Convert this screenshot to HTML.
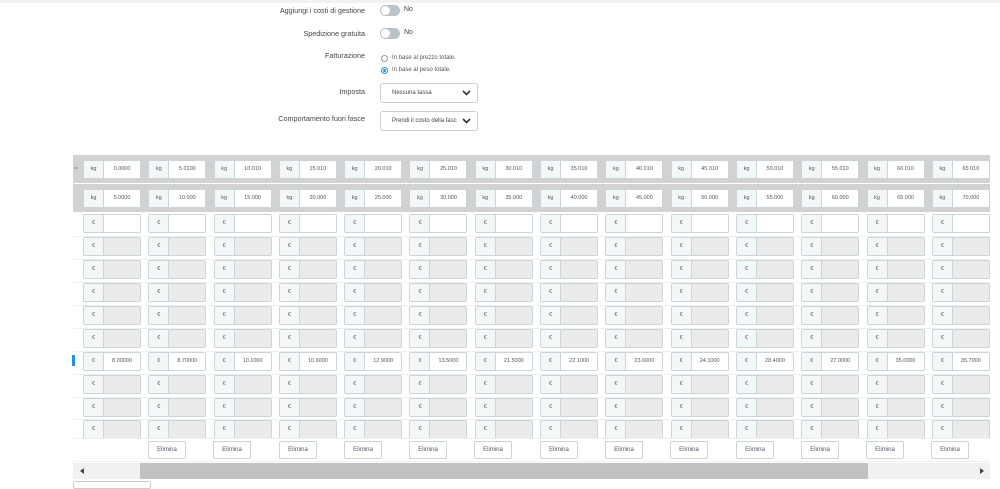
<!DOCTYPE html>
<html><head><meta charset="utf-8"><style>
*{box-sizing:border-box;margin:0;padding:0}
body{width:1000px;height:485px;overflow:hidden;background:#fff;font-family:"Liberation Sans",sans-serif;color:#555;position:relative}
.topl{position:absolute;left:0;top:0;width:1000px;height:3px;background:#f2f2f2}
.lbl{position:absolute;right:635px;font-size:7.2px;color:#444;white-space:nowrap}
.tog{position:absolute;left:380px;width:20px;height:11px;border-radius:6px;background:#b9c3c8}
.tog:after{content:"";position:absolute;left:1px;top:1px;width:9px;height:9px;border-radius:50%;background:#fff}
.no{position:absolute;left:404px;font-size:7px;color:#444}
.rad{position:absolute;left:381px;width:7px;height:7px;border-radius:50%;border:1px solid #999;background:#fff}
.rad.on{border-color:#2a8fe0}.rad.on:after{content:"";position:absolute;left:1px;top:1px;width:3px;height:3px;border-radius:50%;background:#2a8fe0}
.rt{position:absolute;left:392px;font-size:6px;color:#555}
.sel{position:absolute;left:380px;width:98px;height:20px;border:1px solid #c8d0d4;border-radius:3px;font-size:6px;color:#444;padding:6px 0 0 11px;background:#fff}
.sel svg{position:absolute;right:6px;top:6px}
.band{position:absolute;left:73px;width:917px;background:#d2d2d2}
.row{position:absolute;left:73px;height:23px;display:flex;width:930px}
.c{width:65.3px;flex:none;position:relative}
.g{position:absolute;left:10px;top:2px;width:58px;height:19px;border:1px solid #c9d5d9;border-radius:2px;display:flex;background:#fff;font-size:5.5px;color:#555}
.a{width:20px;border-right:1px solid #c9d5d9;background:#f4f7f8;text-align:center;line-height:17px;color:#555}
.i{flex:1;text-align:center;line-height:17px;background:#fff}
.gr .i{background:#ebebeb}
.sep{position:absolute;left:73px;width:917px;height:1px;background:#efefef}
.eb{position:absolute;top:441px;width:38px;height:18px;border:1px solid #c9d5d9;border-radius:2px;font-size:6px;color:#556;text-align:center;line-height:16px;background:#fff}
</style></head><body>
<div class="topl"></div>
<div class="lbl" style="top:6px">Aggiungi i costi di gestione</div><div class="tog" style="top:5px"></div><div class="no" style="top:6px">No</div>
<div class="lbl" style="top:29px">Spedizione gratuita</div><div class="tog" style="top:28px"></div><div class="no" style="top:29px">No</div>
<div class="lbl" style="top:51px">Fatturazione</div>
<div class="rad" style="top:55px"></div><div class="rt" style="top:55px">In base al prezzo totale.</div>
<div class="rad on" style="top:67px"></div><div class="rt" style="top:67px">In base al peso totale.</div>
<div class="lbl" style="top:87px">Imposta</div>
<div class="sel" style="top:83px">Nessuna tassa<svg width="9" height="6" viewBox="0 0 9 6"><path d="M1 1l3.5 3.5L8 1" stroke="#333" stroke-width="1.6" fill="none"/></svg></div>
<div class="lbl" style="top:114px">Comportamento fuori fasce</div>
<div class="sel" style="top:111px">Prendi il costo della fasc<svg width="9" height="6" viewBox="0 0 9 6"><path d="M1 1l3.5 3.5L8 1" stroke="#333" stroke-width="1.6" fill="none"/></svg></div>

<div class="band" style="top:155px;height:28px"></div>
<div class="band" style="top:184px;height:28px"></div>
<div style="position:absolute;left:74px;top:166px;font-size:6px;color:#777">=</div>
<div class="row" style="top:158px">
<div class="c"><div class="g"><div class="a">kg</div><div class="i">0.0000</div></div></div>
<div class="c"><div class="g"><div class="a">kg</div><div class="i">5.0100</div></div></div>
<div class="c"><div class="g"><div class="a">kg</div><div class="i">10.010</div></div></div>
<div class="c"><div class="g"><div class="a">kg</div><div class="i">15.010</div></div></div>
<div class="c"><div class="g"><div class="a">kg</div><div class="i">20.010</div></div></div>
<div class="c"><div class="g"><div class="a">kg</div><div class="i">25.010</div></div></div>
<div class="c"><div class="g"><div class="a">kg</div><div class="i">30.010</div></div></div>
<div class="c"><div class="g"><div class="a">kg</div><div class="i">35.010</div></div></div>
<div class="c"><div class="g"><div class="a">kg</div><div class="i">40.010</div></div></div>
<div class="c"><div class="g"><div class="a">kg</div><div class="i">45.010</div></div></div>
<div class="c"><div class="g"><div class="a">kg</div><div class="i">50.010</div></div></div>
<div class="c"><div class="g"><div class="a">kg</div><div class="i">55.010</div></div></div>
<div class="c"><div class="g"><div class="a">kg</div><div class="i">60.010</div></div></div>
<div class="c"><div class="g"><div class="a">kg</div><div class="i">65.010</div></div></div>
</div>
<div class="row" style="top:187px">
<div class="c"><div class="g"><div class="a">kg</div><div class="i">5.0000</div></div></div>
<div class="c"><div class="g"><div class="a">kg</div><div class="i">10.000</div></div></div>
<div class="c"><div class="g"><div class="a">kg</div><div class="i">15.000</div></div></div>
<div class="c"><div class="g"><div class="a">kg</div><div class="i">20.000</div></div></div>
<div class="c"><div class="g"><div class="a">kg</div><div class="i">25.000</div></div></div>
<div class="c"><div class="g"><div class="a">kg</div><div class="i">30.000</div></div></div>
<div class="c"><div class="g"><div class="a">kg</div><div class="i">35.000</div></div></div>
<div class="c"><div class="g"><div class="a">kg</div><div class="i">40.000</div></div></div>
<div class="c"><div class="g"><div class="a">kg</div><div class="i">45.000</div></div></div>
<div class="c"><div class="g"><div class="a">kg</div><div class="i">50.000</div></div></div>
<div class="c"><div class="g"><div class="a">kg</div><div class="i">55.000</div></div></div>
<div class="c"><div class="g"><div class="a">kg</div><div class="i">60.000</div></div></div>
<div class="c"><div class="g"><div class="a">kg</div><div class="i">65.000</div></div></div>
<div class="c"><div class="g"><div class="a">kg</div><div class="i">70.000</div></div></div>
</div>

<div class="row" style="top:212px"><div class="c"><div class="g"><div class="a">€</div><div class="i"></div></div></div><div class="c"><div class="g"><div class="a">€</div><div class="i"></div></div></div><div class="c"><div class="g"><div class="a">€</div><div class="i"></div></div></div><div class="c"><div class="g"><div class="a">€</div><div class="i"></div></div></div><div class="c"><div class="g"><div class="a">€</div><div class="i"></div></div></div><div class="c"><div class="g"><div class="a">€</div><div class="i"></div></div></div><div class="c"><div class="g"><div class="a">€</div><div class="i"></div></div></div><div class="c"><div class="g"><div class="a">€</div><div class="i"></div></div></div><div class="c"><div class="g"><div class="a">€</div><div class="i"></div></div></div><div class="c"><div class="g"><div class="a">€</div><div class="i"></div></div></div><div class="c"><div class="g"><div class="a">€</div><div class="i"></div></div></div><div class="c"><div class="g"><div class="a">€</div><div class="i"></div></div></div><div class="c"><div class="g"><div class="a">€</div><div class="i"></div></div></div><div class="c"><div class="g"><div class="a">€</div><div class="i"></div></div></div></div>
<div class="sep" style="top:236px"></div>
<div class="row gr" style="top:235px"><div class="c"><div class="g"><div class="a">€</div><div class="i"></div></div></div><div class="c"><div class="g"><div class="a">€</div><div class="i"></div></div></div><div class="c"><div class="g"><div class="a">€</div><div class="i"></div></div></div><div class="c"><div class="g"><div class="a">€</div><div class="i"></div></div></div><div class="c"><div class="g"><div class="a">€</div><div class="i"></div></div></div><div class="c"><div class="g"><div class="a">€</div><div class="i"></div></div></div><div class="c"><div class="g"><div class="a">€</div><div class="i"></div></div></div><div class="c"><div class="g"><div class="a">€</div><div class="i"></div></div></div><div class="c"><div class="g"><div class="a">€</div><div class="i"></div></div></div><div class="c"><div class="g"><div class="a">€</div><div class="i"></div></div></div><div class="c"><div class="g"><div class="a">€</div><div class="i"></div></div></div><div class="c"><div class="g"><div class="a">€</div><div class="i"></div></div></div><div class="c"><div class="g"><div class="a">€</div><div class="i"></div></div></div><div class="c"><div class="g"><div class="a">€</div><div class="i"></div></div></div></div>
<div class="row gr" style="top:258px"><div class="c"><div class="g"><div class="a">€</div><div class="i"></div></div></div><div class="c"><div class="g"><div class="a">€</div><div class="i"></div></div></div><div class="c"><div class="g"><div class="a">€</div><div class="i"></div></div></div><div class="c"><div class="g"><div class="a">€</div><div class="i"></div></div></div><div class="c"><div class="g"><div class="a">€</div><div class="i"></div></div></div><div class="c"><div class="g"><div class="a">€</div><div class="i"></div></div></div><div class="c"><div class="g"><div class="a">€</div><div class="i"></div></div></div><div class="c"><div class="g"><div class="a">€</div><div class="i"></div></div></div><div class="c"><div class="g"><div class="a">€</div><div class="i"></div></div></div><div class="c"><div class="g"><div class="a">€</div><div class="i"></div></div></div><div class="c"><div class="g"><div class="a">€</div><div class="i"></div></div></div><div class="c"><div class="g"><div class="a">€</div><div class="i"></div></div></div><div class="c"><div class="g"><div class="a">€</div><div class="i"></div></div></div><div class="c"><div class="g"><div class="a">€</div><div class="i"></div></div></div></div>
<div class="row gr" style="top:281px"><div class="c"><div class="g"><div class="a">€</div><div class="i"></div></div></div><div class="c"><div class="g"><div class="a">€</div><div class="i"></div></div></div><div class="c"><div class="g"><div class="a">€</div><div class="i"></div></div></div><div class="c"><div class="g"><div class="a">€</div><div class="i"></div></div></div><div class="c"><div class="g"><div class="a">€</div><div class="i"></div></div></div><div class="c"><div class="g"><div class="a">€</div><div class="i"></div></div></div><div class="c"><div class="g"><div class="a">€</div><div class="i"></div></div></div><div class="c"><div class="g"><div class="a">€</div><div class="i"></div></div></div><div class="c"><div class="g"><div class="a">€</div><div class="i"></div></div></div><div class="c"><div class="g"><div class="a">€</div><div class="i"></div></div></div><div class="c"><div class="g"><div class="a">€</div><div class="i"></div></div></div><div class="c"><div class="g"><div class="a">€</div><div class="i"></div></div></div><div class="c"><div class="g"><div class="a">€</div><div class="i"></div></div></div><div class="c"><div class="g"><div class="a">€</div><div class="i"></div></div></div></div>
<div class="row gr" style="top:304px"><div class="c"><div class="g"><div class="a">€</div><div class="i"></div></div></div><div class="c"><div class="g"><div class="a">€</div><div class="i"></div></div></div><div class="c"><div class="g"><div class="a">€</div><div class="i"></div></div></div><div class="c"><div class="g"><div class="a">€</div><div class="i"></div></div></div><div class="c"><div class="g"><div class="a">€</div><div class="i"></div></div></div><div class="c"><div class="g"><div class="a">€</div><div class="i"></div></div></div><div class="c"><div class="g"><div class="a">€</div><div class="i"></div></div></div><div class="c"><div class="g"><div class="a">€</div><div class="i"></div></div></div><div class="c"><div class="g"><div class="a">€</div><div class="i"></div></div></div><div class="c"><div class="g"><div class="a">€</div><div class="i"></div></div></div><div class="c"><div class="g"><div class="a">€</div><div class="i"></div></div></div><div class="c"><div class="g"><div class="a">€</div><div class="i"></div></div></div><div class="c"><div class="g"><div class="a">€</div><div class="i"></div></div></div><div class="c"><div class="g"><div class="a">€</div><div class="i"></div></div></div></div>
<div class="row gr" style="top:327px"><div class="c"><div class="g"><div class="a">€</div><div class="i"></div></div></div><div class="c"><div class="g"><div class="a">€</div><div class="i"></div></div></div><div class="c"><div class="g"><div class="a">€</div><div class="i"></div></div></div><div class="c"><div class="g"><div class="a">€</div><div class="i"></div></div></div><div class="c"><div class="g"><div class="a">€</div><div class="i"></div></div></div><div class="c"><div class="g"><div class="a">€</div><div class="i"></div></div></div><div class="c"><div class="g"><div class="a">€</div><div class="i"></div></div></div><div class="c"><div class="g"><div class="a">€</div><div class="i"></div></div></div><div class="c"><div class="g"><div class="a">€</div><div class="i"></div></div></div><div class="c"><div class="g"><div class="a">€</div><div class="i"></div></div></div><div class="c"><div class="g"><div class="a">€</div><div class="i"></div></div></div><div class="c"><div class="g"><div class="a">€</div><div class="i"></div></div></div><div class="c"><div class="g"><div class="a">€</div><div class="i"></div></div></div><div class="c"><div class="g"><div class="a">€</div><div class="i"></div></div></div></div>
<div style="position:absolute;left:72px;top:355px;width:3px;height:11px;background:#2a8fe0"></div>
<div class="row" style="top:350px"><div class="c"><div class="g"><div class="a">€</div><div class="i">8.00000</div></div></div><div class="c"><div class="g"><div class="a">€</div><div class="i">8.70000</div></div></div><div class="c"><div class="g"><div class="a">€</div><div class="i">10.1000</div></div></div><div class="c"><div class="g"><div class="a">€</div><div class="i">10.6000</div></div></div><div class="c"><div class="g"><div class="a">€</div><div class="i">12.9000</div></div></div><div class="c"><div class="g"><div class="a">€</div><div class="i">13.5000</div></div></div><div class="c"><div class="g"><div class="a">€</div><div class="i">21.5000</div></div></div><div class="c"><div class="g"><div class="a">€</div><div class="i">22.1000</div></div></div><div class="c"><div class="g"><div class="a">€</div><div class="i">23.6000</div></div></div><div class="c"><div class="g"><div class="a">€</div><div class="i">24.1000</div></div></div><div class="c"><div class="g"><div class="a">€</div><div class="i">28.4000</div></div></div><div class="c"><div class="g"><div class="a">€</div><div class="i">27.0000</div></div></div><div class="c"><div class="g"><div class="a">€</div><div class="i">35.0000</div></div></div><div class="c"><div class="g"><div class="a">€</div><div class="i">35.7000</div></div></div></div>
<div class="row gr" style="top:373px"><div class="c"><div class="g"><div class="a">€</div><div class="i"></div></div></div><div class="c"><div class="g"><div class="a">€</div><div class="i"></div></div></div><div class="c"><div class="g"><div class="a">€</div><div class="i"></div></div></div><div class="c"><div class="g"><div class="a">€</div><div class="i"></div></div></div><div class="c"><div class="g"><div class="a">€</div><div class="i"></div></div></div><div class="c"><div class="g"><div class="a">€</div><div class="i"></div></div></div><div class="c"><div class="g"><div class="a">€</div><div class="i"></div></div></div><div class="c"><div class="g"><div class="a">€</div><div class="i"></div></div></div><div class="c"><div class="g"><div class="a">€</div><div class="i"></div></div></div><div class="c"><div class="g"><div class="a">€</div><div class="i"></div></div></div><div class="c"><div class="g"><div class="a">€</div><div class="i"></div></div></div><div class="c"><div class="g"><div class="a">€</div><div class="i"></div></div></div><div class="c"><div class="g"><div class="a">€</div><div class="i"></div></div></div><div class="c"><div class="g"><div class="a">€</div><div class="i"></div></div></div></div>
<div class="row gr" style="top:396px"><div class="c"><div class="g"><div class="a">€</div><div class="i"></div></div></div><div class="c"><div class="g"><div class="a">€</div><div class="i"></div></div></div><div class="c"><div class="g"><div class="a">€</div><div class="i"></div></div></div><div class="c"><div class="g"><div class="a">€</div><div class="i"></div></div></div><div class="c"><div class="g"><div class="a">€</div><div class="i"></div></div></div><div class="c"><div class="g"><div class="a">€</div><div class="i"></div></div></div><div class="c"><div class="g"><div class="a">€</div><div class="i"></div></div></div><div class="c"><div class="g"><div class="a">€</div><div class="i"></div></div></div><div class="c"><div class="g"><div class="a">€</div><div class="i"></div></div></div><div class="c"><div class="g"><div class="a">€</div><div class="i"></div></div></div><div class="c"><div class="g"><div class="a">€</div><div class="i"></div></div></div><div class="c"><div class="g"><div class="a">€</div><div class="i"></div></div></div><div class="c"><div class="g"><div class="a">€</div><div class="i"></div></div></div><div class="c"><div class="g"><div class="a">€</div><div class="i"></div></div></div></div>
<div class="row gr" style="top:418px"><div class="c"><div class="g"><div class="a">€</div><div class="i"></div></div></div><div class="c"><div class="g"><div class="a">€</div><div class="i"></div></div></div><div class="c"><div class="g"><div class="a">€</div><div class="i"></div></div></div><div class="c"><div class="g"><div class="a">€</div><div class="i"></div></div></div><div class="c"><div class="g"><div class="a">€</div><div class="i"></div></div></div><div class="c"><div class="g"><div class="a">€</div><div class="i"></div></div></div><div class="c"><div class="g"><div class="a">€</div><div class="i"></div></div></div><div class="c"><div class="g"><div class="a">€</div><div class="i"></div></div></div><div class="c"><div class="g"><div class="a">€</div><div class="i"></div></div></div><div class="c"><div class="g"><div class="a">€</div><div class="i"></div></div></div><div class="c"><div class="g"><div class="a">€</div><div class="i"></div></div></div><div class="c"><div class="g"><div class="a">€</div><div class="i"></div></div></div><div class="c"><div class="g"><div class="a">€</div><div class="i"></div></div></div><div class="c"><div class="g"><div class="a">€</div><div class="i"></div></div></div></div>
<div class="sep" style="top:259px"></div><div class="sep" style="top:282px"></div><div class="sep" style="top:305px"></div><div class="sep" style="top:328px"></div><div class="sep" style="top:351px"></div><div class="sep" style="top:374px"></div><div class="sep" style="top:397px"></div><div class="sep" style="top:419px"></div><div class="sep" style="top:438px"></div><div class="sep" style="top:461px"></div>

<div class="eb" style="left:148px">Elimina</div><div class="eb" style="left:213px">Elimina</div><div class="eb" style="left:279px">Elimina</div><div class="eb" style="left:344px">Elimina</div><div class="eb" style="left:409px">Elimina</div><div class="eb" style="left:474px">Elimina</div><div class="eb" style="left:540px">Elimina</div><div class="eb" style="left:605px">Elimina</div><div class="eb" style="left:670px">Elimina</div><div class="eb" style="left:736px">Elimina</div><div class="eb" style="left:801px">Elimina</div><div class="eb" style="left:866px">Elimina</div><div class="eb" style="left:931px">Elimina</div>

<div style="position:absolute;left:73px;top:463px;width:917px;height:16px;background:#f1f1f1"></div>
<div style="position:absolute;left:140px;top:463px;width:728px;height:16px;background:#c1c1c1"></div>
<div style="position:absolute;left:80px;top:468px;width:0;height:0;border-top:3px solid transparent;border-bottom:3px solid transparent;border-right:4px solid #444"></div>
<div style="position:absolute;left:980px;top:468px;width:0;height:0;border-top:3px solid transparent;border-bottom:3px solid transparent;border-left:4px solid #444"></div>
<div style="position:absolute;left:73px;top:481px;width:78px;height:8px;border:1px solid #ccc;border-radius:2px"></div>
</body></html>
